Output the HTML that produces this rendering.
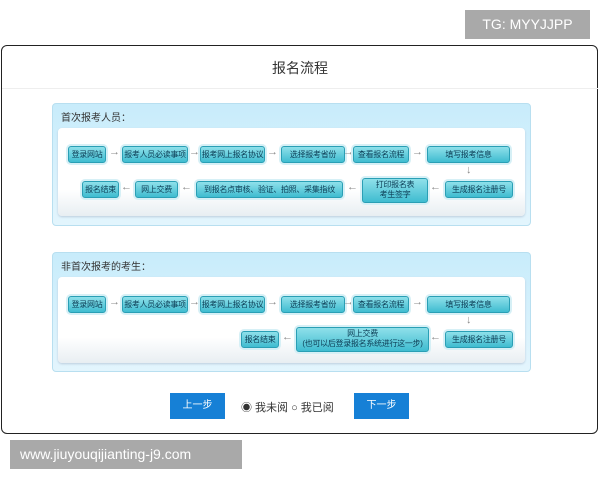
<!DOCTYPE html>
<html><head><meta charset="utf-8"><style>
body{margin:0;width:600px;height:480px;background:#fff;position:relative;overflow:hidden;font-family:"Liberation Sans","Noto Sans CJK SC",sans-serif}
.a{position:absolute}
.tg{left:465px;top:10px;width:125px;height:29px;background:#a9a9a9;color:#fff;font-size:14px;line-height:29px;text-align:center}
.wm{left:10px;top:440px;width:232px;height:29px;background:#a9a9a9;color:#fff;font-size:14px;line-height:29px;text-align:left;padding-left:10px;box-sizing:border-box}
.card{left:1px;top:45px;width:597px;height:389px;border:1px solid #222;border-radius:6px;box-sizing:border-box}
.title{left:0;top:58px;width:600px;text-align:center;font-size:14px;color:#333}
.sep{left:2px;top:88px;width:596px;height:1px;background:#eee}
.panel{left:52px;width:479px;border:1px solid #b8dff0;border-radius:4px;background:linear-gradient(#c8ecfb,#e3f5fd);box-sizing:border-box}
.ph{font-size:10px;color:#333;left:8px;top:5px}
.inner{left:5px;width:467px;background:linear-gradient(#fff 70%,#e8eef2);border-radius:4px;box-shadow:0 1px 2px #bcd}
.b{position:absolute;height:15px;background:linear-gradient(#8fe0ea,#3fbcd0);border:1px solid #2a9fb5;border-radius:3px;box-shadow:0 0 0 2px #d6f0f6;font-size:8px;line-height:15px;color:#0c3d55;text-align:center;white-space:nowrap;overflow:hidden;letter-spacing:-0.3px}
.ar{position:absolute;font-size:11px;color:#888}
.btn{top:393px;width:55px;height:26px;background:#1680d6;color:#fff;font-size:10px;line-height:26px;text-align:center}
</style></head><body>
<div class="a tg">TG: MYYJJPP</div>
<div class="a card"></div>
<div class="a title">报名流程</div>
<div class="a sep"></div>

<div class="a panel" style="top:103px;height:123px">
 <div class="a ph">首次报考人员：</div>
 <div class="a inner" style="top:24px;height:88px"></div>
</div>
<div class="a panel" style="top:252px;height:120px">
 <div class="a ph">非首次报考的考生：</div>
 <div class="a inner" style="top:24px;height:86px"></div>
</div>

<div class="b" style="left:68px;top:146px;width:36px">登录网站</div>
<div class="ar" style="left:109px;top:146px">→</div>
<div class="b" style="left:122px;top:146px;width:64px">报考人员必读事项</div>
<div class="ar" style="left:189px;top:146px">→</div>
<div class="b" style="left:200px;top:146px;width:63px">报考网上报名协议</div>
<div class="ar" style="left:267px;top:146px">→</div>
<div class="b" style="left:281px;top:146px;width:62px">选择报考省份</div>
<div class="ar" style="left:343px;top:146px">→</div>
<div class="b" style="left:353px;top:146px;width:54px">查看报名流程</div>
<div class="ar" style="left:412px;top:146px">→</div>
<div class="b" style="left:427px;top:146px;width:81px">填写报考信息</div>
<div class="ar" style="left:466px;top:164px">↓</div>
<div class="b" style="left:82px;top:181px;width:35px">报名结束</div>
<div class="ar" style="left:121px;top:181px">←</div>
<div class="b" style="left:135px;top:181px;width:41px">网上交费</div>
<div class="ar" style="left:181px;top:181px">←</div>
<div class="b" style="left:196px;top:181px;width:145px">到报名点审核、验证、拍照、采集指纹</div>
<div class="ar" style="left:347px;top:181px">←</div>
<div class="b" style="left:362px;top:178px;width:64px;height:22px;line-height:10px;padding-top:1px">打印报名表<br>考生签字</div>
<div class="ar" style="left:430px;top:181px">←</div>
<div class="b" style="left:445px;top:181px;width:66px">生成报名注册号</div>

<div class="b" style="left:68px;top:296px;width:36px">登录网站</div>
<div class="ar" style="left:109px;top:296px">→</div>
<div class="b" style="left:122px;top:296px;width:64px">报考人员必读事项</div>
<div class="ar" style="left:189px;top:296px">→</div>
<div class="b" style="left:200px;top:296px;width:63px">报考网上报名协议</div>
<div class="ar" style="left:267px;top:296px">→</div>
<div class="b" style="left:281px;top:296px;width:62px">选择报考省份</div>
<div class="ar" style="left:343px;top:296px">→</div>
<div class="b" style="left:353px;top:296px;width:54px">查看报名流程</div>
<div class="ar" style="left:412px;top:296px">→</div>
<div class="b" style="left:427px;top:296px;width:81px">填写报考信息</div>
<div class="ar" style="left:466px;top:314px">↓</div>
<div class="b" style="left:241px;top:331px;width:36px">报名结束</div>
<div class="ar" style="left:282px;top:331px">←</div>
<div class="b" style="left:296px;top:327px;width:131px;height:22px;line-height:10px;padding-top:1px">网上交费<br>(也可以后登录报名系统进行这一步)</div>
<div class="ar" style="left:430px;top:331px">←</div>
<div class="b" style="left:445px;top:331px;width:66px">生成报名注册号</div>

<div class="a btn" style="left:170px">上一步</div>
<div class="a btn" style="left:354px">下一步</div>
<div class="a" style="left:241px;top:399px;font-size:11px;color:#333">◉ 我未阅 ○ 我已阅</div>

<div class="a wm">www.jiuyouqijianting-j9.com</div>
</body></html>
